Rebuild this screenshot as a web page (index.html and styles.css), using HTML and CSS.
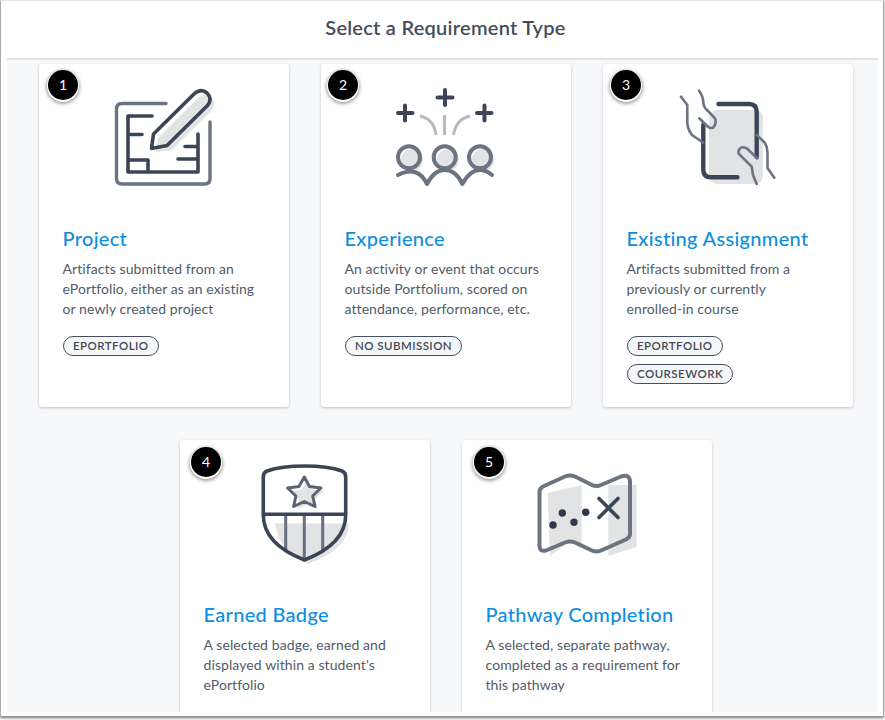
FILE: index.html
```html
<!DOCTYPE html>
<html lang="en">
<head>
<meta charset="utf-8">
<title>Select a Requirement Type</title>
<link rel="stylesheet" href="styles.css">
</head>
<body>
<div class="window">
  <header class="header"><h1 class="heading">Select a Requirement Type</h1></header>
  <main class="content">
    <article class="card">
      <span class="step step-1">1</span>
      <svg class="icon" viewBox="104 84 120 110">
        <path class="fill" d="M156 152 L158 138 L198 98 Q206 92 212 98 Q216 104 212 110 L172 150 Z"/>
        <path class="gray" d="M166 103.500 H122 Q116.500 103.500 116.500 109 V178.500 Q116.500 184 122 184 H204.500 Q210 184 210 178.500 V122"/>
        <path class="navy" d="M152 116 H128 V172 H198 V134 M128 134.500 H142 M185 146.500 H198 M178 159 H198 M128 160 H148 V172"/>
        <path class="navy" d="M151.500 148.500 L153.500 134 L194 94 Q201 88 207 93 Q213 99 207.500 105.500 L167 145.500 Z"/>
      </svg>
      <h2 class="title">Project</h2>
      <p class="desc">Artifacts submitted from an ePortfolio, either as an existing or newly created project</p>
      <div class="tags"><span class="tag">EPORTFOLIO</span></div>
    </article>
    <article class="card">
      <span class="step step-2">2</span>
      <svg class="icon" viewBox="386 84 120 110">
        <circle class="fill" cx="412" cy="160" r="11"/><circle class="fill" cx="448" cy="160" r="11"/><circle class="fill" cx="483" cy="160" r="11"/>
        <path class="navy plus" d="M398 113 H412.500 M405 105.500 V120.500 M437.500 97.500 H452.500 M445 90 V105 M477 113 H491.500 M484.500 105.500 V120.500"/>
        <path class="light" d="M420 116 Q434 119 436 135 M444.500 115 V135 M470 116 Q456 119 453.500 135"/>
        <circle class="gray ring" cx="409" cy="157.300" r="11"/><circle class="gray ring" cx="444.700" cy="157.300" r="11"/><circle class="gray ring" cx="480" cy="157.300" r="11"/>
        <path class="gray ring" d="M398 175 Q418 165 427 184 Q434 170 444.700 170 Q456 170 462.300 184 Q470 170 480 170 Q486 170 492 175"/>
      </svg>
      <h2 class="title">Experience</h2>
      <p class="desc">An activity or event that occurs outside Portfolium, scored on attendance, performance, etc.</p>
      <div class="tags"><span class="tag">NO SUBMISSION</span></div>
    </article>
    <article class="card">
      <span class="step step-3">3</span>
      <svg class="icon" viewBox="668 84 120 110">
        <rect class="fill" x="709" y="110" width="54" height="74" rx="8"/>
        <path class="navy phone" d="M718.500 104 H749 Q756.700 104 756.700 112 V157 M703.300 125 V170 Q703.300 177.300 711 177.300 H737.500"/>
        <path class="gray thin" d="M681 96.700 L687.300 105 V123 Q688 130 692 135 L703.300 142.700 M699 90.700 Q703 96 703.300 102 Q703.500 107 707 110 L715 118.300 Q717 124 713 127.700 Q710 128.500 708 126.700 L699.300 118.300 M756.700 135 L765 143 Q767.500 147 767.500 153 V168 L774.300 177.700 M757.300 158.300 L746.700 148.300 Q742 146 739.500 149 Q737.500 152 739 154 L751.700 166.700 Q752.500 171 753 175 L756.700 184"/>
      </svg>
      <h2 class="title">Existing Assignment</h2>
      <p class="desc">Artifacts submitted from a previously or currently <span class="nowrap">enrolled-in</span> course</p>
      <div class="tags"><span class="tag">EPORTFOLIO</span><span class="tag">COURSEWORK</span></div>
    </article>
    <article class="card">
      <span class="step step-4">4</span>
      <svg class="icon" viewBox="245 460 120 110">
        <path class="fill" d="M275 523.500 H349 C348 544 330 556 308.500 563.500 C292 557 278 545 275 523.500 Z"/>
        <path class="fill" d="M307 480 L312 489.500 L323.500 491 L315 499 L317.500 509.500 L307 504.500 L296.500 509.500 L299 499 L290.500 491 L302 489.500 Z"/>
        <path class="slate" d="M285.700 514 V551 M304.300 514 V560 M322.700 514 V551"/>
        <path class="navy" d="M305 466 Q328 466 342 471 Q345.700 472.500 345.700 477 V515 C345.700 538 325 552 304.500 560 C284 552 263.300 538 263.300 515 V477 Q263.300 472.500 267 471 Q281 466 305 466 Z M263.300 514.300 H345.700"/>
        <path class="slate join" d="M304.300 477 L309.500 486.500 L321 488 L312.700 496 L315 506.500 L304.300 501.500 L293.600 506.500 L295.900 496 L287.600 488 L299 486.500 Z"/>
      </svg>
      <h2 class="title">Earned Badge</h2>
      <p class="desc">A selected badge, earned and displayed within a student's ePortfolio</p>
    </article>
    <article class="card">
      <span class="step step-5">5</span>
      <svg class="icon" viewBox="527 460 120 110">
        <path class="fill" d="M547.500 493 L581.700 485 V545 L570 541 L550 556 Z"/>
        <path class="fill" d="M608.300 485 L636.700 485 V546.700 L608.300 556 Z"/>
        <path class="gray map" d="M543 486.500 L565 476.500 Q570 474.500 575 476.500 L592 485 Q596.700 487 601 485 L621 476.500 Q630 473.500 630 482 V534 Q630 537.500 626 539.500 L601 550.500 Q596.700 552.500 592 550.500 L575 542.500 Q570 540.500 565 542.500 L546 550.500 Q539.500 552 539.500 546 V492 Q539.500 488.500 543 486.500 Z"/>
        <circle class="dot" cx="553" cy="525" r="3.700"/><circle class="dot" cx="562.300" cy="513" r="3.700"/><circle class="dot" cx="574" cy="522.300" r="3.700"/><circle class="dot" cx="585.700" cy="512.300" r="3.700"/>
        <path class="navy" d="M599 498.500 L618 517.500 M618 498.500 L599 517.500"/>
      </svg>
      <h2 class="title">Pathway Completion</h2>
      <p class="desc">A selected, separate pathway, completed as a requirement for this pathway</p>
    </article>
  </main>
</div>
</body>
</html>
```

FILE: styles.css
```css
* { box-sizing: border-box; }
html, body { margin: 0; padding: 0; background: #fff; overflow: hidden; }
body { width: 885px; height: 720px; font-family: Lato, "Open Sans", sans-serif; color: #525b68; }
.window {
  width: 882px;
  height: 716px;
  margin-left: 1px;
  padding: 0 5px 4px 6px;
  background: #fff;
  display: flex;
  flex-direction: column;
  border-top: 1px solid #e4e4e4;
  box-shadow: 0 1px 2px 1px #8f8f8f, 0 2px 4px rgba(0,0,0,.25);
}
.header {
  height: 59px;
  flex: none;
  border-bottom: 2px solid #e1e3e6;
  display: flex;
  align-items: center;
  justify-content: center;
  padding: 0 0 6px 6px;
}
.heading { margin: 0; font-size: 20px; font-weight: 600; color: #434d5b; letter-spacing: .25px; }
.content {
  flex: 1;
  min-height: 0;
  overflow: hidden;
  background: #f7f8fa;
  padding: 4px 25px 0 32px;
  display: flex;
  flex-wrap: wrap;
  justify-content: center;
  align-content: flex-start;
  gap: 33px 32px;
}
.card {
  position: relative;
  width: 250px;
  height: 343px;
  padding: 20px 24px 0;
  background: #fff;
  border-radius: 3px;
  box-shadow: 0 1px 3px rgba(45,55,70,.28);
}
.icon { display: block; width: 120px; height: 110px; margin: 0 auto; overflow: visible; }
.icon path, .icon circle { fill: none; stroke-linecap: round; stroke-linejoin: round; }
.icon .fill { fill: #e2e3e5; stroke: none; }
.icon .gray { stroke: #6b7480; stroke-width: 3.4; }
.icon .navy { stroke: #3a4656; stroke-width: 3.6; }
.icon .plus { stroke-width: 4; }
.icon .ring { stroke-width: 4; }
.icon .phone { stroke-width: 4.4; }
.icon .light { stroke: #b7bbc1; stroke-width: 3; stroke-linecap: butt; }
.icon .thin { stroke-width: 2.6; }
.icon .slate { stroke: #677080; stroke-width: 3; stroke-linecap: butt; }
.icon .join { stroke: #5c6472; stroke-linecap: round; }
.icon .map { stroke-width: 4; }
.icon .dot { fill: #2e3a4a; stroke: none; }
.title { margin: 32px 0 0 -.5px; font-size: 20px; line-height: 24px; font-weight: 500; color: #0d8ee0; letter-spacing: .3px; }
.desc { margin: 9px 0 0 -.5px; font-size: 14px; line-height: 20px; color: #525b68; letter-spacing: .09px; }
.nowrap { white-space: nowrap; }
.tags { margin-top: 17px; display: flex; flex-direction: column; align-items: flex-start; gap: 8px; }
.tag {
  height: 20px;
  padding: 0 9px;
  border: 1px solid #445060;
  border-radius: 10px;
  background: #f5f6f7;
  font-size: 11.5px;
  line-height: 18px;
  font-weight: 600;
  letter-spacing: .45px;
  color: #414b59;
}
.step {
  position: absolute;
  width: 30px;
  height: 30px;
  border-radius: 50%;
  background: #000;
  color: #fff;
  font-size: 14px;
  font-weight: 400;
  line-height: 30px;
  text-align: center;
  box-shadow: 0 1px 0 1px #fff, 0 2px 4px 1px rgba(0,0,0,.55);
}
.step-1 { left: 9px; top: 6px; }
.step-2 { left: 7px; top: 6px; }
.step-3 { left: 8px; top: 6px; }
.step-4 { left: 11px; top: 7px; }
.step-5 { left: 12px; top: 7px; }
```
